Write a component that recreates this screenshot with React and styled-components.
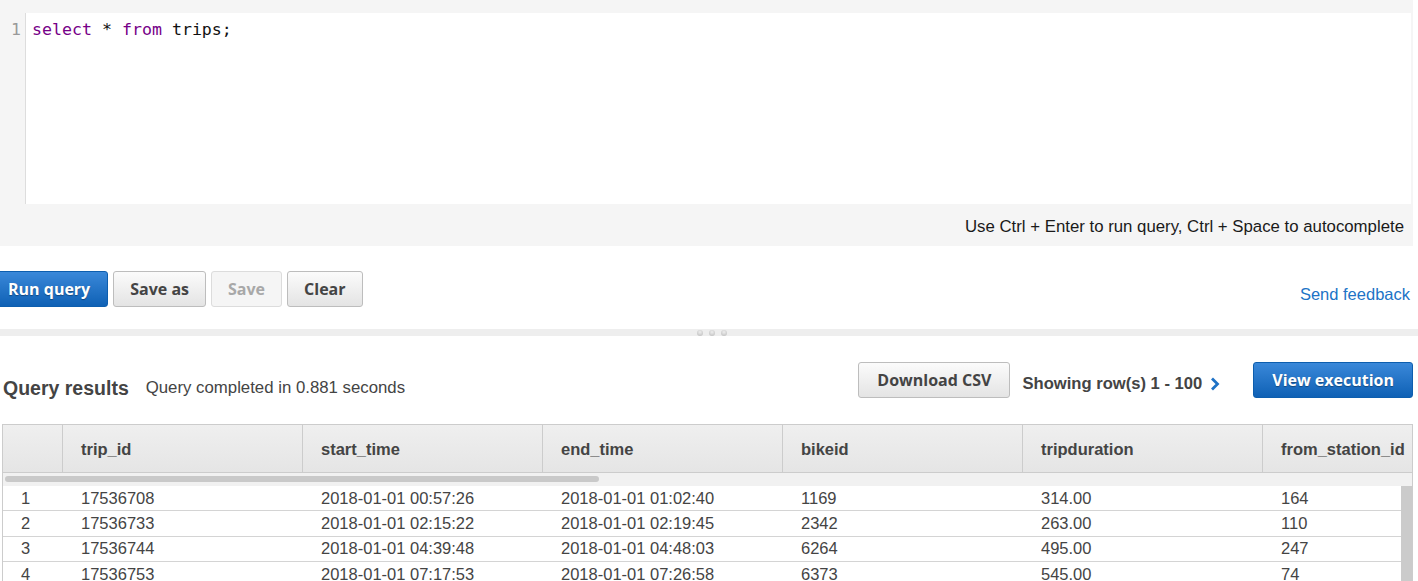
import React from "react";
import styled, { createGlobalStyle } from "styled-components";

const Global = createGlobalStyle`
  html, body { margin: 0; padding: 0; overflow: hidden; background: #fff; }
  body { font-family: "Liberation Sans", Arial, sans-serif; color: #444; }
  * { box-sizing: border-box; }
`;

const Page = styled.div`
  width: 1418px;
  display: flex;
  flex-direction: column;
`;

const EditorPanel = styled.div`
  width: 1413px;
  background: #f5f5f5;
  padding: 13px 2px 0 0;
  display: flex;
  flex-direction: column;
`;

const EditorBox = styled.div`
  height: 191px;
  background: #fff;
  display: flex;
`;

const Gutter = styled.div`
  width: 26px;
  background: #f5f5f5;
  border-right: 1px solid #dddddd;
  padding: 7px 4px 0 0;
  text-align: right;
  font-family: "DejaVu Sans Mono", monospace;
  font-size: 16.5px;
  line-height: 20px;
  color: #999;
`;

const Code = styled.div`
  padding: 7px 0 0 6px;
  font-family: "DejaVu Sans Mono", monospace;
  font-size: 16.6px;
  line-height: 20px;
  color: #111;
  white-space: pre;
`;

const Keyword = styled.span`
  color: #770088;
`;

const HintBar = styled.div`
  height: 42px;
  display: flex;
  align-items: center;
  justify-content: flex-end;
  padding: 3px 7px 0 0;
  font-size: 16.8px;
  color: #1a1a1a;
`;

const ActionRow = styled.div`
  display: flex;
  align-items: center;
  margin-top: 25px;
  width: 1418px;
  padding-right: 8px;
`;

const ButtonGroup = styled.div`
  display: flex;
  gap: 5px;
  margin-left: -10px;
`;

const Button = styled.button`
  height: 36px;
  padding: 0 ${(p) => p.$pad || 16}px;
  border-radius: 3px;
  font-family: "Open Sans", sans-serif;
  font-weight: 700;
  font-size: 16px;
  cursor: pointer;
  white-space: nowrap;
  border: 1px solid ${(p) => (p.$primary ? "#0d5eae" : p.disabled ? "#dcdcdc" : "#bdbdbd")};
  color: ${(p) => (p.$primary ? "#fff" : p.disabled ? "#a8a8a8" : "#444")};
  background: ${(p) =>
    p.$primary
      ? "linear-gradient(#3a88d9, #0f61b5)"
      : p.disabled
      ? "#f5f5f5"
      : "linear-gradient(#fbfbfb, #e4e4e4)"};
  text-shadow: ${(p) => (p.$primary ? "0 1px 1px rgba(0,0,0,0.35)" : "none")};
`;

const FeedbackLink = styled.a`
  margin-left: auto;
  margin-top: 10px;
  color: #2073c6;
  font-size: 16.5px;
  text-decoration: none;
`;

const Divider = styled.div`
  margin-top: 22px;
  height: 7px;
  background: #eeeeee;
  display: flex;
  justify-content: center;
  align-items: center;
  gap: 6px;
  padding-left: 6px;
`;

const Dot = styled.span`
  width: 6px;
  height: 6px;
  border-radius: 50%;
  background: radial-gradient(circle at 50% 35%, #eeeeee, #b9b9b9);
`;

const ResultsHeader = styled.div`
  margin-top: 26px;
  height: 36px;
  display: flex;
  align-items: center;
  padding-left: 3px;
  width: 1413px;
`;

const Title = styled.h2`
  margin: 16px 0 0 0;
  font-size: 19.5px;
  font-weight: 700;
  color: #444;
`;

const Subtitle = styled.span`
  margin: 16px 0 0 17px;
  font-size: 16.8px;
  color: #444;
`;

const Spacer = styled.div`
  flex: 1;
`;

const RowInfo = styled.span`
  margin: 8px 0 0 12px;
  font-weight: 700;
  font-size: 16.6px;
  color: #444;
  display: flex;
  align-items: center;
  gap: 8px;
`;

const ChevronIcon = styled.svg`
  margin-right: 33px;
`;

const TableFrame = styled.div`
  margin: 26px 0 0 2px;
  width: 1411px;
  border: 1px solid #cccccc;
  border-bottom: none;
  overflow: hidden;
`;

const Grid = styled.div`
  display: grid;
  grid-template-columns: 60px repeat(6, 240px);
`;

const HeaderRow = styled(Grid)`
  height: 48px;
  background: linear-gradient(#efefef, #e5e5e5);
  border-bottom: 1px solid #cccccc;
`;

const HeaderCell = styled.div`
  border-right: 1px solid #cccccc;
  padding: 2px 0 0 18px;
  display: flex;
  align-items: center;
  font-weight: 700;
  font-size: 16.5px;
  color: #444;
  white-space: nowrap;
`;

const HScroll = styled.div`
  height: 13px;
  background: #f1f1f1;
  padding: 3px 0 0 2px;
`;

const HThumb = styled.div`
  width: 594px;
  height: 6px;
  border-radius: 3px;
  background: #c9c9c9;
`;

const BodyWrap = styled.div`
  display: flex;
`;

const Rows = styled.div`
  flex: 1;
  overflow: hidden;
  background: #fff;
`;

const DataRow = styled(Grid)`
  height: 25.4px;
  border-bottom: 1px solid #d4d4d4;
`;

const DataCell = styled.div`
  padding-left: 18px;
  display: flex;
  align-items: center;
  font-size: 16.5px;
  color: #444;
  white-space: nowrap;
`;

const VScroll = styled.div`
  width: 11px;
  background: #cbcbcb;
`;

const columns = ["", "trip_id", "start_time", "end_time", "bikeid", "tripduration", "from_station_id"];

const data = [
  ["1", "17536708", "2018-01-01 00:57:26", "2018-01-01 01:02:40", "1169", "314.00", "164"],
  ["2", "17536733", "2018-01-01 02:15:22", "2018-01-01 02:19:45", "2342", "263.00", "110"],
  ["3", "17536744", "2018-01-01 04:39:48", "2018-01-01 04:48:03", "6264", "495.00", "247"],
  ["4", "17536753", "2018-01-01 07:17:53", "2018-01-01 07:26:58", "6373", "545.00", "74"],
];

export default function App() {
  return (
    <Page>
      <Global />
      <EditorPanel>
        <EditorBox>
          <Gutter>1</Gutter>
          <Code>
            <Keyword>select</Keyword> * <Keyword>from</Keyword> trips;
          </Code>
        </EditorBox>
        <HintBar>Use Ctrl + Enter to run query, Ctrl + Space to autocomplete</HintBar>
      </EditorPanel>

      <ActionRow>
        <ButtonGroup>
          <Button $primary $pad={17}>Run query</Button>
          <Button>Save as</Button>
          <Button disabled>Save</Button>
          <Button>Clear</Button>
        </ButtonGroup>
        <FeedbackLink href="#">Send feedback</FeedbackLink>
      </ActionRow>

      <Divider>
        <Dot />
        <Dot />
        <Dot />
      </Divider>

      <ResultsHeader>
        <Title>Query results</Title>
        <Subtitle>Query completed in 0.881 seconds</Subtitle>
        <Spacer />
        <Button $pad={18}>Download CSV</Button>
        <RowInfo>
          Showing row(s) 1 - 100
          <ChevronIcon width="10" height="14" viewBox="0 0 10 14">
            <path d="M2 1.5 L7.5 7 L2 12.5" fill="none" stroke="#1f72c6" strokeWidth="2.8" />
          </ChevronIcon>
        </RowInfo>
        <Button $primary $pad={18}>View execution</Button>
      </ResultsHeader>

      <TableFrame>
        <HeaderRow>
          {columns.map((c, i) => (
            <HeaderCell key={i}>{c}</HeaderCell>
          ))}
        </HeaderRow>
        <HScroll>
          <HThumb />
        </HScroll>
        <BodyWrap>
          <Rows>
            {data.map((row, r) => (
              <DataRow key={r}>
                {row.map((v, i) => (
                  <DataCell key={i}>{v}</DataCell>
                ))}
              </DataRow>
            ))}
          </Rows>
          <VScroll />
        </BodyWrap>
      </TableFrame>
    </Page>
  );
}
